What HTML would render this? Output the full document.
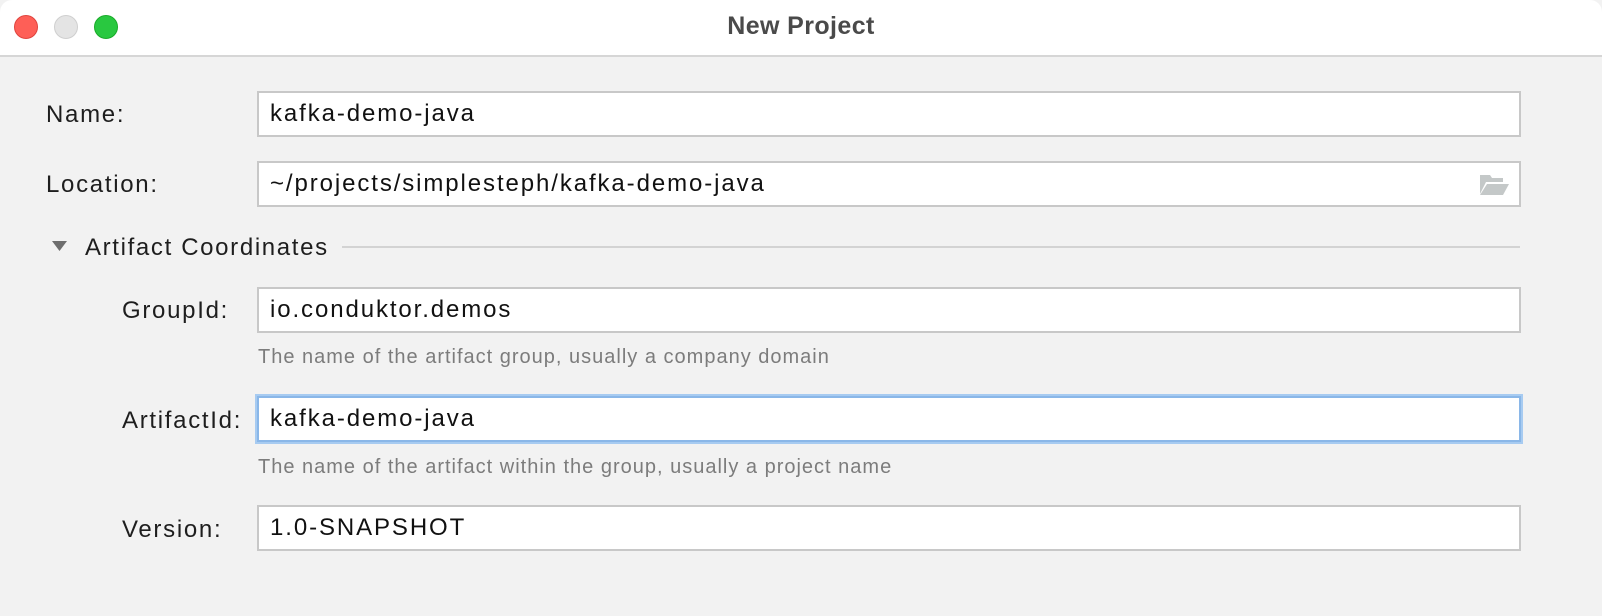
<!DOCTYPE html>
<html><head><style>
body{margin:0;width:1602px;height:616px;background:#f2f2f2;font-family:"Liberation Sans",sans-serif;position:relative;overflow:hidden}
.title{position:absolute;left:0;top:0;width:1602px;height:55px;background:#fff;border-bottom:2px solid #d6d6d6;border-top-left-radius:12px;border-top-right-radius:12px}
.title span{position:absolute;left:0;right:0;top:12px;text-align:center;font-weight:bold;font-size:25px;letter-spacing:0.4px;color:#4a4a4a}
.dot{position:absolute;top:15px;width:22px;height:22px;border-radius:50%}
.lbl{position:absolute;font-size:24px;letter-spacing:1.7px;color:#1e1e1e}
.box{position:absolute;left:257px;width:1249px;height:42px;background:#fff;border:2px solid #c8c8c8;font-size:24px;letter-spacing:1.9px;color:#111;line-height:42px;padding-left:11px;box-sizing:content-box}
.hint{position:absolute;left:258px;font-size:20px;letter-spacing:1px;color:#7c7c7c}
</style></head><body>
<div class="title"><span>New Project</span></div>
<div class="dot" style="left:14px;background:#fe5f57;border:1px solid #e0443e"></div>
<div class="dot" style="left:54px;background:#e4e4e4;border:1px solid #cfcfcf"></div>
<div class="dot" style="left:94px;background:#29c840;border:1px solid #1aab29"></div>

<div class="lbl" style="left:46px;top:101px">Name:</div>
<div class="box" style="top:91px">kafka-demo-java</div>

<div class="lbl" style="left:46px;top:171px">Location:</div>
<div class="box" style="top:161px">~/projects/simplesteph/kafka-demo-java
<svg style="position:absolute;right:10px;top:11px" width="30" height="22" viewBox="0 0 30 22"><path d="M1 1h10l2 3h11v4H7L1 20z" fill="#c4c8c8"/><path d="M8 10h22l-6 11H1z" fill="#c4c8c8"/></svg></div>

<svg style="position:absolute;left:52px;top:241px" width="16" height="12"><path d="M0 0h15l-7.5 10z" fill="#6e6e6e"/></svg>
<div class="lbl" style="left:85px;top:234px;letter-spacing:1.65px">Artifact Coordinates</div>
<div style="position:absolute;left:342px;top:246px;width:1178px;height:2px;background:#d3d3d3"></div>

<div class="lbl" style="left:122px;top:297px">GroupId:</div>
<div class="box" style="top:287px">io.conduktor.demos</div>
<div class="hint" style="top:346px">The name of the artifact group, usually a company domain</div>

<div class="lbl" style="left:122px;top:407px">ArtifactId:</div>
<div class="box" style="top:396px;border-color:#8ab7e8;box-shadow:0 0 0 2px #a7cbf1">kafka-demo-java</div>
<div class="hint" style="top:456px">The name of the artifact within the group, usually a project name</div>

<div class="lbl" style="left:122px;top:516px">Version:</div>
<div class="box" style="top:505px">1.0-SNAPSHOT</div>
</body></html>
